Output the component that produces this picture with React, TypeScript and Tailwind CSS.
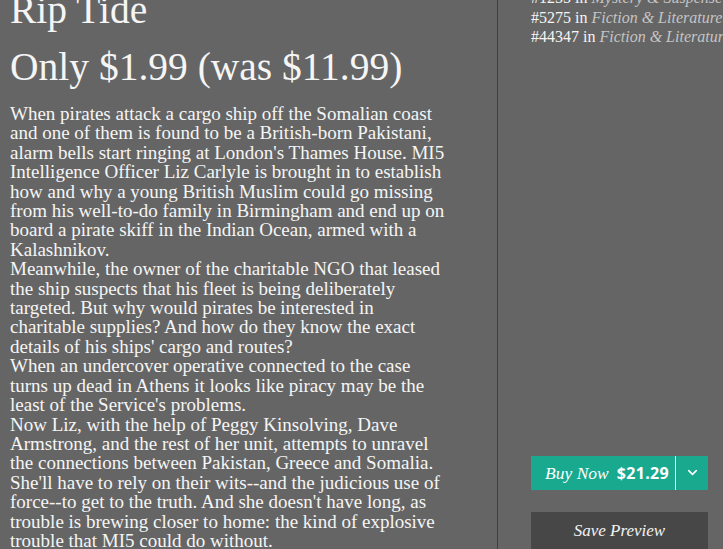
import React from 'react';
import { ChevronDown } from 'lucide-react';

const serif = 'font-["Liberation_Serif","DejaVu_Serif",serif]';

const ranks = [
  { n: '#1255', cat: 'Mystery & Suspense' },
  { n: '#5275', cat: 'Fiction & Literature' },
  { n: '#44347', cat: 'Fiction & Literature' },
];

const paragraphs = [
  "When pirates attack a cargo ship off the Somalian coast and one of them is found to be a British-born Pakistani, alarm bells start ringing at London's Thames House. MI5 Intelligence Officer Liz Carlyle is brought in to establish how and why a young British Muslim could go missing from his well-to-do family in Birmingham and end up on board a pirate skiff in the Indian Ocean, armed with a Kalashnikov.",
  "Meanwhile, the owner of the charitable NGO that leased the ship suspects that his fleet is being deliberately targeted. But why would pirates be interested in charitable supplies? And how do they know the exact details of his ships' cargo and routes?",
  "When an undercover operative connected to the case turns up dead in Athens it looks like piracy may be the least of the Service's problems.",
  "Now Liz, with the help of Peggy Kinsolving, Dave Armstrong, and the rest of her unit, attempts to unravel the connections between Pakistan, Greece and Somalia. She'll have to rely on their wits--and the judicious use of force--to get to the truth. And she doesn't have long, as trouble is brewing closer to home: the kind of explosive trouble that MI5 could do without.",
];

export default function App() {
  return (
    <div className={`w-[723px] h-[549px] overflow-hidden bg-[#656565] flex ${serif}`}>
      {/* description column */}
      <div className="w-[498px] shrink-0 border-r border-[#3f3f3f] pl-[10px]">
        <div className="-mt-[13px] w-[436px] text-[#f5f5f5]">
          <h1 className="text-[39.5px] leading-[46px]">Rip Tide</h1>
          <h2 className="mt-[11px] text-[39.5px] leading-[46px] whitespace-nowrap">Only $1.99 (was $11.99)</h2>
          <div className="mt-[14px] text-[19px] leading-[19.4px]">
            {paragraphs.map((p, i) => (
              <p key={i}>{p}</p>
            ))}
          </div>
        </div>
      </div>

      {/* sidebar */}
      <div className="flex-1 pl-[33px] flex flex-col">
        <div className="-mt-[12px] text-[16px] leading-[19.5px] whitespace-nowrap">
          {ranks.map(r => (
            <div key={r.n} className="text-[#f5f5f5]">
              {r.n} in <span className="italic text-[#c4c4c4]">{r.cat}</span>
            </div>
          ))}
        </div>

        <div className="mt-[409px] w-[177px] h-[38px] flex bg-[#18a98f] text-white">
          <button className="flex-1 flex items-center justify-center gap-[8px] pl-[8px]">
            <span className="italic text-[17.5px]">Buy Now</span>
            <span className='font-["Open_Sans",sans-serif] font-bold text-[16px] tracking-[0.3px]'>$21.29</span>
          </button>
          <div className="w-px bg-[#e6f6f2]" />
          <button className="w-[32px] flex items-center justify-center">
            <ChevronDown size={15} strokeWidth={2.5} />
          </button>
        </div>

        <button className="mt-[22px] w-[177px] h-[40px] bg-[#474747] text-[#f3f3f3] italic text-[17px]">
          Save Preview
        </button>
      </div>
    </div>
  );
}
